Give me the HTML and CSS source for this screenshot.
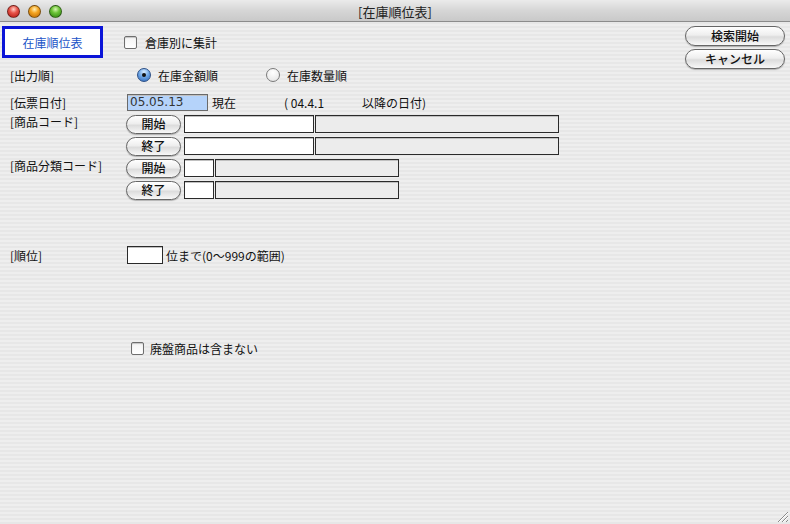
FILE: index.html
```html
<!DOCTYPE html>
<html lang="ja">
<head>
    <meta charset="UTF-8">
    <title>[在庫順位表]</title>
    <link rel="stylesheet" href="styles.css">
</head>
<body>
<div class="window">
    <!-- タイトルバー -->
    <div class="titlebar">
        <div class="lights">
            <span class="light red"></span>
            <span class="light yellow"></span>
            <span class="light green"></span>
        </div>
        <div class="title">[在庫順位表]</div>
    </div>

    <div class="content">
        <div class="form">
            <div class="row header">
                <div class="badge">在庫順位表</div>
                <label class="check first"><span class="box"></span>倉庫別に集計</label>
            </div>

            <div class="row order">
                <div class="label">[出力順]</div>
                <label class="radio on"><span class="dot"></span>在庫金額順</label>
                <label class="radio"><span class="dot"></span>在庫数量順</label>
            </div>

            <div class="row date">
                <div class="label">[伝票日付]</div>
                <div class="field date-field">05.05.13</div>
                <span class="now">現在</span>
                <span class="since">( 04.4.1</span>
                <span class="after">以降の日付)</span>
            </div>

            <div class="row code">
                <div class="label">[商品コード]</div>
                <button class="pill">開始</button>
                <div class="field code-field"></div>
                <div class="field name-field"></div>
            </div>
            <div class="row code">
                <div class="label"></div>
                <button class="pill">終了</button>
                <div class="field code-field"></div>
                <div class="field name-field"></div>
            </div>

            <div class="row code">
                <div class="label">[商品分類コード]</div>
                <button class="pill">開始</button>
                <div class="field class-field"></div>
                <div class="field class-name"></div>
            </div>
            <div class="row code">
                <div class="label"></div>
                <button class="pill">終了</button>
                <div class="field class-field"></div>
                <div class="field class-name"></div>
            </div>

            <div class="row rank">
                <div class="label">[順位]</div>
                <div class="field rank-field"></div>
                <span class="rank-text">位まで(0〜999の範囲)</span>
            </div>

            <div class="row discontinued">
                <div class="label"></div>
                <label class="check"><span class="box"></span>廃盤商品は含まない</label>
            </div>
        </div>

        <div class="actions">
            <button class="pill wide">検索開始</button>
            <button class="pill wide">キャンセル</button>
        </div>
    </div>

    <svg class="grip" width="14" height="14" viewBox="0 0 14 14">
        <path d="M13 3 L3 13 M13 7 L7 13 M13 11 L11 13" stroke="#8a8a8a" stroke-width="1"/>
        <path d="M13 4 L4 13 M13 8 L8 13" stroke="#ffffff" stroke-width="1"/>
    </svg>
</div>
</body>
</html>
```

FILE: styles.css
```css
body {
    margin: 0;
    padding: 0;
    font-family: "Noto Sans CJK JP", "DejaVu Sans", sans-serif;
    font-size: 12px;
    color: #111;
}
.window {
    position: relative;
    width: 790px;
    height: 524px;
    overflow: hidden;
    background: repeating-linear-gradient(#eeeeee 0 2px, #e7e7e7 2px 4px);
}
.titlebar {
    height: 21px;
    border-bottom: 1px solid #8c8c8c;
    background: linear-gradient(#ebebeb, #d6d6d6 50%, #c9c9c9);
    position: relative;
    display: flex;
    align-items: center;
    justify-content: center;
}
.lights {
    position: absolute;
    left: 7px;
    top: 5px;
    display: flex;
    gap: 8px;
}
.light {
    width: 13px;
    height: 13px;
    border-radius: 50%;
    box-sizing: border-box;
    border: 1px solid rgba(0, 0, 0, 0.45);
}
.red {
    background: radial-gradient(circle at 50% 30%, #ffd0c8 0, #e8554a 40%, #b0140e 100%);
}
.yellow {
    background: radial-gradient(circle at 50% 30%, #fff1b8 0, #f5a623 40%, #b86400 100%);
}
.green {
    background: radial-gradient(circle at 50% 30%, #d8f5b0 0, #6cc437 40%, #2c7d0c 100%);
}
.title {
    font-size: 13px;
    color: #222;
    padding-top: 1px;
}
.content {
    display: flex;
    justify-content: space-between;
}
.form {
    flex: 1;
}
.row {
    display: flex;
    align-items: center;
}
.label {
    width: 116px;
    padding-left: 10px;
    flex-shrink: 0;
}
.header {
    margin-top: 4px;
    height: 32px;
}
.badge {
    margin-left: 2px;
    width: 95px;
    height: 26px;
    border: 3px solid #0a14d8;
    background: #ffffff;
    color: #1c55c8;
    display: flex;
    align-items: center;
    justify-content: center;
}
.check {
    display: flex;
    align-items: center;
}
.check.first {
    margin-left: 21px;
}
.box {
    width: 11px;
    height: 11px;
    border: 1px solid #6e6e6e;
    border-radius: 2px;
    background: linear-gradient(#f4f4f4, #ffffff);
    box-shadow: inset 0 1px 1px rgba(0, 0, 0, 0.2);
    margin-right: 8px;
}
.order {
    margin-top: 8px;
    height: 18px;
}
.radio {
    display: flex;
    align-items: center;
    margin-left: 11px;
}
.radio + .radio {
    margin-left: 48px;
}
.dot {
    width: 12px;
    height: 12px;
    border: 1px solid #7a7a7a;
    border-radius: 50%;
    background: radial-gradient(circle at 50% 30%, #ffffff, #e2e2e2);
    margin-right: 7px;
    display: flex;
    align-items: center;
    justify-content: center;
}
.radio.on .dot {
    border-color: #2b4f86;
    background: radial-gradient(circle at 50% 25%, #d8ecff 0, #6fa7e6 45%, #2e67b8 100%);
}
.radio.on .dot::after {
    content: "";
    width: 4px;
    height: 4px;
    border-radius: 50%;
    background: #111;
}
.date {
    margin-top: 9px;
    height: 18px;
}
.field {
    box-sizing: border-box;
    height: 18px;
    border: 1px solid #2a2a2a;
    background: #ffffff;
    box-shadow: inset 0 1px 0 #c0c0c0;
}
.date-field {
    margin-left: 1px;
    width: 81px;
    height: 17px;
    background: #b5d3fa;
    border-color: #6a6a6a;
    font-family: "DejaVu Sans", sans-serif;
    font-size: 12px;
    line-height: 15px;
    padding-left: 2px;
    color: #333;
}
.now {
    margin-left: 4px;
}
.since {
    margin-left: 48px;
}
.after {
    margin-left: 38px;
}
.code {
    margin-top: 2px;
    height: 20px;
}
.code .label {
    align-self: flex-start;
    line-height: 16px;
}
.date + .code {
    margin-top: 3px;
}
.pill {
    box-sizing: border-box;
    width: 55px;
    height: 19px;
    padding: 0;
    border: 1px solid #666;
    border-radius: 10px;
    background: linear-gradient(#ffffff, #eeeeee 45%, #dcdcdc 55%, #f8f8f8);
    box-shadow: 0 1px 1px rgba(0, 0, 0, 0.25);
    font-family: "Noto Sans CJK JP", sans-serif;
    font-size: 12px;
    font-weight: 500;
    color: #111;
    line-height: 16px;
}
.code-field {
    margin-left: 3px;
    width: 130px;
}
.name-field {
    margin-left: 1px;
    width: 244px;
    background: #ececec;
}
.class-field {
    margin-left: 3px;
    width: 30px;
}
.class-name {
    margin-left: 1px;
    width: 184px;
    background: #ececec;
}
.rank {
    margin-top: 46px;
    height: 18px;
}
.rank-field {
    margin-left: 1px;
    width: 36px;
}
.rank-text {
    margin-left: 3px;
}
.discontinued {
    margin-top: 77px;
    height: 14px;
}
.discontinued .check {
    margin-left: 5px;
}
.discontinued .box {
    margin-right: 6px;
}
.actions {
    margin-top: 4px;
    margin-right: 5px;
    display: flex;
    flex-direction: column;
    gap: 3px;
}
.pill.wide {
    width: 100px;
    height: 20px;
}
.grip {
    position: absolute;
    right: 1px;
    bottom: 1px;
}
```
